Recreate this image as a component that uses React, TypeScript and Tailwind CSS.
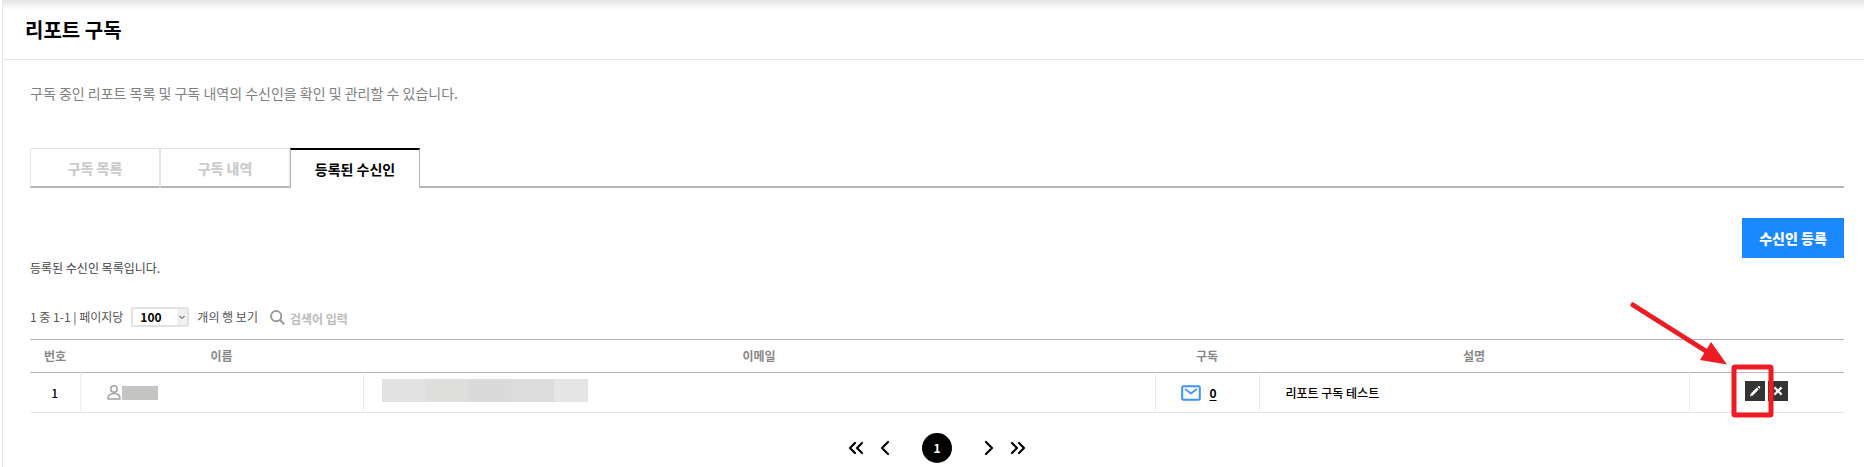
import React, { useState } from "react";
import { ChevronLeft, ChevronRight, ChevronsLeft, ChevronsRight } from "lucide-react";

// Types
interface Recipient {
  id: number;
  subscriptions: number;
  description: string;
}

const tabs = ["구독 목록", "구독 내역", "등록된 수신인"];

const recipients: Recipient[] = [
  { id: 1, subscriptions: 0, description: "리포트 구독 테스트" },
];

const UserIcon = () => (
  <svg width="14" height="15" viewBox="0 0 14 15" fill="none" stroke="#a3a3a3" strokeWidth="1.5">
    <circle cx="7" cy="4" r="3.2" />
    <path d="M.9 14.1c0-3.6 2.6-5.5 6.1-5.5s6.1 1.9 6.1 5.5z" strokeLinejoin="round" />
  </svg>
);

const MailIcon = () => (
  <svg width="20" height="16" viewBox="0 0 20 16" fill="none" stroke="#3b93ff" strokeWidth="2">
    <rect x="1.2" y="1.2" width="17.6" height="13.6" rx="1" />
    <path d="M4 4l6 4.4L16 4" strokeWidth="1.6" />
  </svg>
);

const SearchIcon = () => (
  <svg width="15" height="15" viewBox="0 0 15 15" fill="none" stroke="#9a9a9a" strokeWidth="2">
    <circle cx="6.2" cy="6.2" r="5.1" />
    <path d="M10 10l4.2 4.2" />
  </svg>
);

const PencilIcon = () => (
  <svg width="20" height="20" viewBox="0 0 20 20" fill="#fff">
    <path d="M5 15.4l.9-2.9 5.900-5.900 1.900 1.900-5.900 5.900z" />
    <path d="M12.500 5.900l.6-.6a1.350 1.350 0 0 1 1.900 1.900l-.6.6z" />
  </svg>
);

const CloseIcon = () => (
  <svg width="20" height="20" viewBox="0 0 20 20" stroke="#fff" strokeWidth="2.2">
    <path d="M6.400 6.400l7.200 7.200M13.600 6.400l-7.200 7.200" />
  </svg>
);

// Arrow and frame that point at the edit button
const EditHighlight = () => (
  <svg
    className="pointer-events-none absolute -left-[117px] -top-[81px]"
    width="150"
    height="122"
    viewBox="0 0 150 122"
    fill="none"
  >
    <path d="M5 5l76 48" stroke="#ed1c24" strokeWidth="5" strokeLinecap="round" />
    <path d="M83 42l16 22.500L72 60z" fill="#ed1c24" />
    <rect x="106" y="67" width="37" height="48" rx="1" stroke="#ed1c24" strokeWidth="5" />
  </svg>
);

const RecipientTable = () => (
  <table className="mt-3 w-full table-fixed border-collapse border-t border-[#b5b5b5] text-xs">
    <colgroup>
      <col className="w-[50px]" />
      <col className="w-[283px]" />
      <col />
      <col className="w-[104px]" />
      <col className="w-[430px]" />
      <col className="w-[155px]" />
    </colgroup>
    <thead>
      <tr className="h-[33px] border-b border-[#b5b5b5] text-[#888]">
        <th className="font-bold">번호</th>
        <th className="font-bold">이름</th>
        <th className="font-bold">이메일</th>
        <th className="font-bold">구독</th>
        <th className="font-bold">설명</th>
        <td />
      </tr>
    </thead>
    <tbody>
      {recipients.map((recipient) => (
        <tr key={recipient.id} className="h-10 border-b border-[#e5e5e5] font-medium text-black">
          <td className="border-r border-[#ececec] text-center">{recipient.id}</td>
          <td className="border-r border-[#ececec] pl-[26px]">
            <div className="flex items-center gap-px">
              <UserIcon />
              <span className="h-3.5 w-9 bg-[#c4c4c2]" />
            </div>
          </td>
          <td className="border-r border-[#ececec] pl-[18px]">
            <div className="-mt-1 flex h-[23px] w-[206px]">
              <span className="w-[43px] bg-[#e2e2e2]" />
              <span className="w-[43px] bg-[#dededc]" />
              <span className="w-[43px] bg-[#dadada]" />
              <span className="w-[43px] bg-[#dcdcdc]" />
              <span className="flex-1 bg-[#e5e5e5]" />
            </div>
          </td>
          <td className="border-r border-[#ececec]">
            <div className="flex items-center pl-[25px]">
              <MailIcon />
              <a href="#subscriptions" className="ml-[9px] font-bold underline underline-offset-2">
                {recipient.subscriptions}
              </a>
            </div>
          </td>
          <td className="border-r border-[#ececec] pl-[26px]">{recipient.description}</td>
          <td className="pb-1">
            <div className="relative mx-auto flex w-[43px] gap-[3px]">
              <button type="button" aria-label="수정" className="size-5 bg-[#333]">
                <PencilIcon />
              </button>
              <button type="button" aria-label="삭제" className="size-5 bg-[#333]">
                <CloseIcon />
              </button>
              <EditHighlight />
            </div>
          </td>
        </tr>
      ))}
    </tbody>
  </table>
);

const Pagination = () => (
  <nav className="mt-5 flex items-center justify-center text-black">
    <button type="button" aria-label="처음">
      <ChevronsLeft size={24} strokeWidth={2.2} />
    </button>
    <button type="button" aria-label="이전" className="ml-[5px]">
      <ChevronLeft size={24} strokeWidth={2.2} />
    </button>
    <button
      type="button"
      className="mx-[25px] size-[30px] rounded-full bg-black text-xs font-bold text-white"
    >
      1
    </button>
    <button type="button" aria-label="다음">
      <ChevronRight size={24} strokeWidth={2.2} />
    </button>
    <button type="button" aria-label="마지막" className="ml-[5px]">
      <ChevronsRight size={24} strokeWidth={2.2} />
    </button>
  </nav>
);

export default function App() {
  const [activeTab, setActiveTab] = useState(2);
  const [pageSize, setPageSize] = useState("100");

  return (
    <div className="min-h-screen bg-white pl-0.5 font-['Noto_Sans_CJK_KR',sans-serif]">
      <div className="min-h-screen border-l border-[#e6e6f0]">
        {/* Header */}
        <header className="flex h-[60px] items-center border-b border-[#e9e9e9] bg-[linear-gradient(#e4e4e4,#fff_10px)] pl-[22px]">
          <h1 className="text-xl font-bold text-black">리포트 구독</h1>
        </header>

        <main className="pl-[27px] pr-5">
          <p className="pt-[23px] text-sm leading-5 text-[#808080]">
            구독 중인 리포트 목록 및 구독 내역의 수신인을 확인 및 관리할 수 있습니다.
          </p>

          {/* Tabs */}
          <div role="tablist" className="mt-[45px] flex h-10 text-sm font-bold">
            {tabs.map((tab, index) => (
              <button
                key={tab}
                type="button"
                role="tab"
                aria-selected={index === activeTab}
                onClick={() => setActiveTab(index)}
                className={
                  index === activeTab
                    ? "w-[130px] border-x border-t-2 border-x-[#b5b5b5] border-t-black text-black"
                    : "w-[130px] border border-b-2 border-[#e5e5e5] border-b-[#b5b5b5] font-black text-[#ccc]"
                }
              >
                {tab}
              </button>
            ))}
            <div className="flex-1 border-b-2 border-[#b5b5b5]" />
          </div>

          <div className="mt-[30px] flex justify-end">
            <button type="button" className="h-10 w-[102px] bg-[#1a88ff] text-sm font-black text-white">
              수신인 등록
            </button>
          </div>
          <p className="text-xs leading-5 text-[#444]">등록된 수신인 목록입니다.</p>

          {/* Page size and search */}
          <div className="mt-[29px] flex h-5 items-center text-xs text-[#555]">
            <label htmlFor="page-size">1 중 1-1 | 페이지당</label>
            <div className="relative ml-2 h-5 w-[58px]">
              <select
                id="page-size"
                value={pageSize}
                onChange={(e) => setPageSize(e.target.value)}
                className="block h-5 w-full appearance-none rounded-xs border-2 border-[#e2e2e2] bg-[linear-gradient(to_left,#f0f0f0_10px,#fff_10px)] pl-[7px] font-bold leading-4 text-black"
              >
                <option>100</option>
                <option>50</option>
              </select>
              <svg className="pointer-events-none absolute right-1 top-2" width="6" height="5" viewBox="0 0 6 5" fill="none" stroke="#333">
                <path d="M.5 1L3 3.500 5.500 1" />
              </svg>
            </div>
            <span className="ml-2">개의 행 보기</span>
            <label htmlFor="search" className="ml-3" aria-label="검색">
              <SearchIcon />
            </label>
            <input
              id="search"
              type="text"
              placeholder="검색어 입력"
              className="ml-[5px] h-5 w-40 pt-0.5 font-bold outline-none placeholder:text-[#bbb]"
            />
          </div>

          <RecipientTable />
          <Pagination />
        </main>
      </div>
    </div>
  );
}
